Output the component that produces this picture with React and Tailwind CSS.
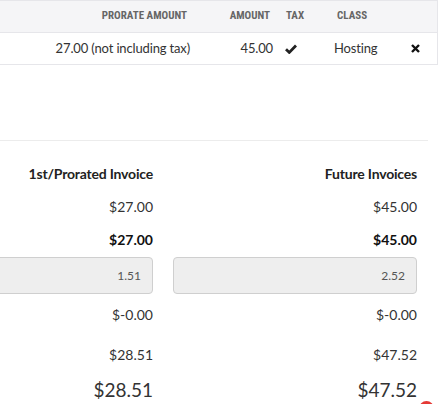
import React from "react";

const body = { fontFamily: '"Source Sans Pro", Lato, "Open Sans", sans-serif' };
const head = { fontFamily: '"Roboto Condensed", "Liberation Sans Narrow", "DejaVu Sans Condensed", Roboto, sans-serif' };

function Check() {
  return (
    <svg width="12" height="10" viewBox="0 0 12 10">
      <path d="M1 5.2 L4.3 8.4 L11 1.6" stroke="#222" strokeWidth="2.8" fill="none" strokeLinejoin="miter" />
    </svg>
  );
}

function Cross() {
  return (
    <svg width="9" height="9" viewBox="0 0 9 9">
      <path d="M1 1 L8 8 M8 1 L1 8" stroke="#111" strokeWidth="2.4" strokeLinecap="butt" />
    </svg>
  );
}

function Col({ title, a, b, input, c, d, e }) {
  return (
    <div className="flex flex-col items-stretch text-right text-[#333]">
      <div className="h-[34px] flex items-center justify-end text-[14px] font-bold text-[#222] tracking-[-0.2px]">{title}</div>
      <div className="h-[33px] flex items-center justify-end text-[14px]">{a}</div>
      <div className="h-[33px] flex items-center justify-end text-[14px] font-bold text-[#111]">{b}</div>
      <div className="h-[37px] mt-[1px] flex items-center justify-end rounded-[4px] border border-[#cfcfcf] bg-[#eeeeee] pr-[11px] text-[12px] text-[#555]">
        {input}
      </div>
      <div className="h-[40px] flex items-center justify-end text-[14px]">{c}</div>
      <div className="h-[40px] flex items-center justify-end text-[14px]">{d}</div>
      <div className="h-[32px] flex items-center justify-end text-[19px]">{e}</div>
    </div>
  );
}

export default function App() {
  return (
    <div className="relative w-[441px] h-[404px] overflow-hidden bg-white" style={body}>
      <div className="w-[438px] border-t border-r border-b border-[#e6e6ea]">
        <div className="h-[32px] flex items-center bg-[#f5f5f7] border-b border-[#e6e6ea] text-[11px] font-bold text-[#666] uppercase" style={head}>
          <div className="w-[187px] text-right">Prorate Amount</div>
          <div className="w-[83px] text-right">Amount</div>
          <div className="w-[16px]" />
          <div className="w-[51px]">Tax</div>
          <div className="w-[40px]">Class</div>
        </div>
        <div className="h-[31px] flex items-center text-[13px] text-[#333] tracking-[-0.15px]">
          <div className="w-[190px] text-right">27.00 (not including tax)</div>
          <div className="w-[83px] text-right">45.00</div>
          <div className="w-[12px]" />
          <div className="w-[49px] flex items-center"><Check /></div>
          <div className="w-[77px]">Hosting</div>
          <div className="flex items-center"><Cross /></div>
        </div>
      </div>
      <div className="mt-[75px] w-[428px] border-t border-[#ececec]" />
      <div className="ml-[-91px] grid grid-cols-[244px_244px] gap-x-[20px] pt-[15px]">
        <Col title="1st/Prorated Invoice" a="$27.00" b="$27.00" input="1.51" c="$-0.00" d="$28.51" e="$28.51" />
        <Col title="Future Invoices" a="$45.00" b="$45.00" input="2.52" c="$-0.00" d="$47.52" e="$47.52" />
      </div>
      <div className="absolute left-[419px] top-[401px] w-[15px] h-[15px] rounded-full bg-[#e53935]" />
    </div>
  );
}
